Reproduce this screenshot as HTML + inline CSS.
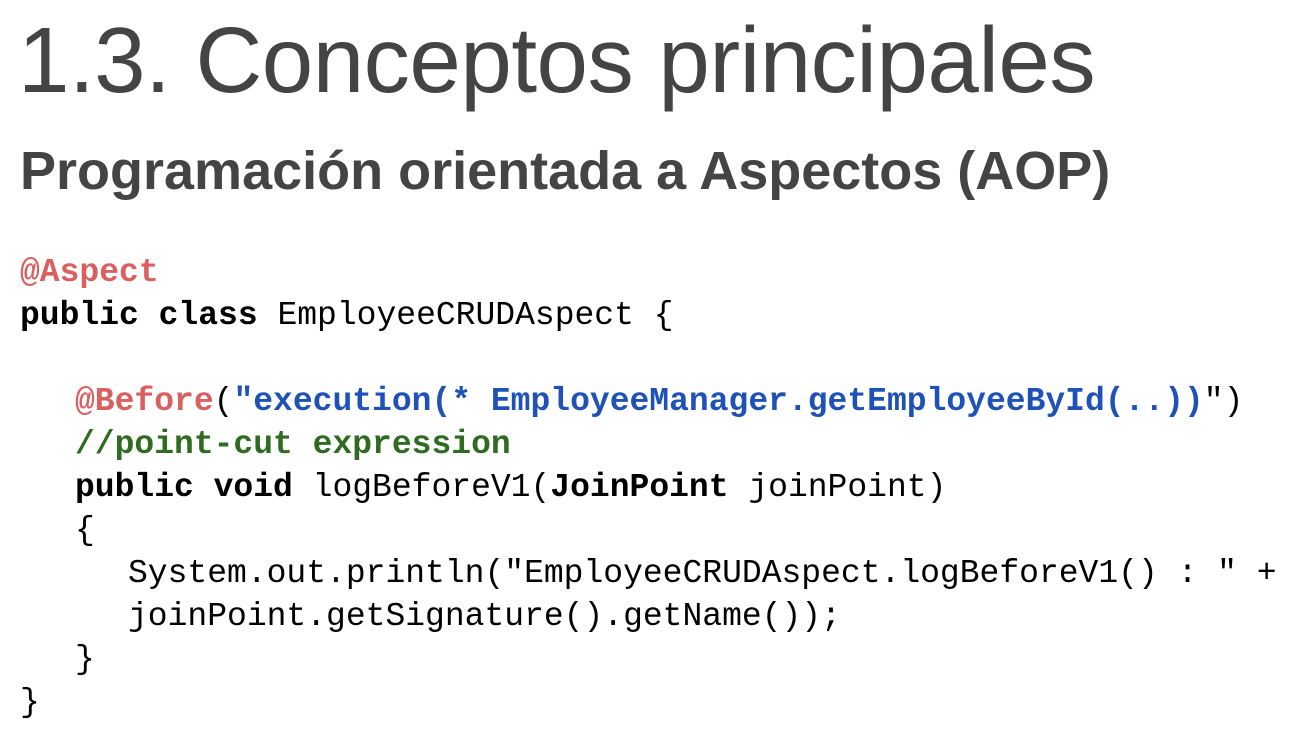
<!DOCTYPE html>
<html><head><meta charset="utf-8"><style>
body{margin:0;width:1305px;height:732px;background:#fff;overflow:hidden;position:relative}
.t{position:absolute;left:18px;top:7px;font-family:"Liberation Sans",sans-serif;font-size:92.5px;color:#444;white-space:nowrap;letter-spacing:-0.5px}
.s{position:absolute;left:20px;top:140px;font-family:"Liberation Sans",sans-serif;font-weight:bold;font-size:54px;color:#444;white-space:nowrap;letter-spacing:0px}
.c{position:absolute;left:20px;top:251px;font-family:"Liberation Mono",monospace;font-size:33px;line-height:43px;color:#000;white-space:pre}
.r{color:#d9605f;font-weight:bold}.b{color:#1f52b8;font-weight:bold}.g{color:#2f6b21;font-weight:bold}.k{font-weight:bold}
.i1{padding-left:55px}.i2{padding-left:108px}
</style></head><body>
<div class="t">1.3. Conceptos principales</div>
<div class="s">Programación orientada a Aspectos (AOP)</div>
<div class="c"><div><span class="r">@Aspect</span></div><div><span class="k">public class</span> EmployeeCRUDAspect {</div><div> </div><div class="i1"><span class="r">@Before</span>(<span class="b">"execution(* EmployeeManager.getEmployeeById(..))</span>")</div><div class="i1"><span class="g">//point-cut expression</span></div><div class="i1"><span class="k">public void</span> logBeforeV1(<span class="k">JoinPoint</span> joinPoint)</div><div class="i1">{</div><div class="i2">System.out.println("EmployeeCRUDAspect.logBeforeV1() : " +</div><div class="i2">joinPoint.getSignature().getName());</div><div class="i1">}</div><div>}</div></div>
</body></html>
